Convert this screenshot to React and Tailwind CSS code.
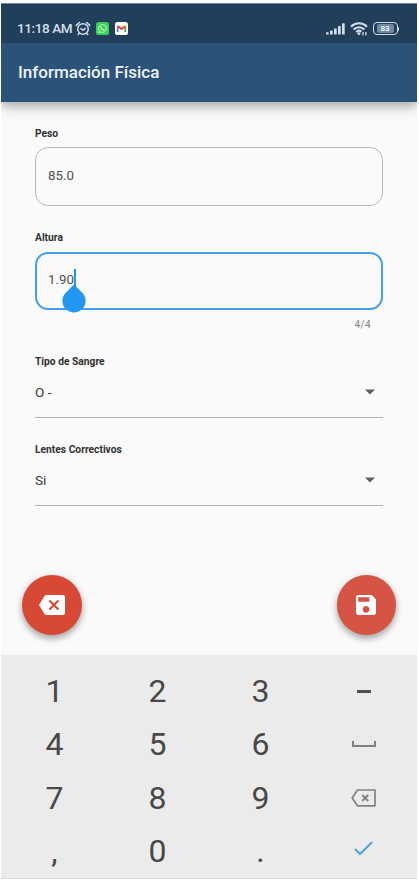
const STATUS_FG = '#d3deea';

function AlarmIcon() {
  return (
    <svg className="ml-[3px] h-[15px] w-[16px] shrink-0" viewBox="0 0 16 15" fill="none" stroke={STATUS_FG} strokeWidth="1.5" strokeLinecap="round">
      <circle cx="8" cy="8" r="5.3" />
      <path d="M1.2 4.4 4.4 1.5M14.8 4.4 11.6 1.5M5.9 7.6 8 9l2.3-1.6M4.4 12.2l-1.2 1.3M11.6 12.2l1.2 1.3" />
    </svg>
  );
}

function WhatsAppIcon() {
  return (
    <svg className="ml-[5px] h-[13px] w-[13px] shrink-0" viewBox="0 0 13 13">
      <rect width="13" height="13" rx="2.6" fill="#35d253" />
      <path d="M2.6 10.6 3.2 8.5A3.9 3.9 0 1 1 4.7 9.9Z" fill="#35d253" stroke="#d9fbdc" strokeWidth="0.9" strokeLinejoin="round" />
      <path d="M5 4.7c.1 1.6 1.4 3.1 3.2 3.3" fill="none" stroke="#d9fbdc" strokeWidth="1.1" strokeLinecap="round" />
    </svg>
  );
}

function GmailIcon() {
  return (
    <svg className="ml-[6px] h-[13px] w-[13px] shrink-0" viewBox="0 0 13 13">
      <rect width="13" height="13" rx="2.6" fill="#fdfdfd" />
      <path d="M2.7 10V4.2" stroke="#4285f4" strokeWidth="1.7" />
      <path d="M10.3 10V4.2" stroke="#34a853" strokeWidth="1.7" />
      <path d="M2.5 3.9 6.5 7 10.5 3.9" fill="none" stroke="#e8392c" strokeWidth="1.9" strokeLinejoin="round" />
      <path d="M9.5 4.7V3.5L11.150 3v2.6Z" fill="#fbbc04" />
    </svg>
  );
}

function SignalIcon() {
  return (
    <svg className="h-[12px] w-[19px] shrink-0" viewBox="0 0 19 12" fill={STATUS_FG}>
      <rect x="0" y="9.2" width="2.7" height="2.3" rx=".6" />
      <rect x="4" y="7.6" width="2.7" height="3.9" rx=".6" />
      <rect x="8" y="5.4" width="2.7" height="6.1" rx=".6" />
      <rect x="12" y="3" width="2.7" height="8.5" rx=".6" />
      <rect x="16" y="0.3" width="2.7" height="11.2" rx=".6" />
    </svg>
  );
}

function WifiIcon() {
  return (
    <svg className="ml-[5px] h-[14px] w-[18px] shrink-0" viewBox="0 0 18 14" fill="none" stroke={STATUS_FG}>
      <path d="M1 4.7a11.2 11.2 0 0 1 16 0M3.6 7.5a7.5 7.5 0 0 1 10.8 0M6.2 9.900a4 4 0 0 1 5.2-.3" strokeWidth="2" />
      <path d="m6.7 11 2.3 2.5 1.7-2.1a2.6 2.6 0 0 0-4-.4Z" fill={STATUS_FG} stroke="none" />
      <path d="M13 10v3.5M15.9 10v3.5" strokeWidth="1.3" />
    </svg>
  );
}

function Battery() {
  return (
    <div className="ml-[5px] flex items-center">
      <div className="flex h-[13px] w-[25px] items-center justify-center rounded-[4px] border-[1.5px] border-[#d3deea] p-[1px]">
        <div className="flex h-full w-[17px] items-center justify-center rounded-[2px] bg-[#7088a0] text-[8px] leading-none font-bold text-[#eaf1f8]">83</div>
      </div>
      <div className="h-[4px] w-[1.5px] rounded-r bg-[#d3deea]" />
    </div>
  );
}

function Label({ children }) {
  return <div className="h-[14px] text-[10.25px] leading-[15px] font-bold whitespace-nowrap text-[#303030]">{children}</div>;
}

function SelectField({ label, value }) {
  return (
    <div className="flex flex-col">
      <Label>{label}</Label>
      <div className="mt-[7px] flex h-[43px] items-start justify-between border-b border-[#b4b4b4] pt-[7px] pr-[8px]">
        <span className="text-[13.6px] leading-[20px] text-[#383838]">{value}</span>
        <svg className="mt-[7px] h-[6px] w-[10px]" viewBox="0 0 10 6" fill="#606060">
          <path d="M0 .4h10L5 5.6Z" />
        </svg>
      </div>
    </div>
  );
}

function Key({ children }) {
  return <div className="flex h-[53.5px] items-center justify-center text-[32px] leading-none text-[#484848]">{children}</div>;
}

function SpaceKey() {
  return (
    <svg className="h-[8px] w-[24px]" viewBox="0 0 24 8" fill="none" stroke="#808080" strokeWidth="2">
      <path d="M1 1v5h22V1" />
    </svg>
  );
}

function DeleteKey() {
  return (
    <svg className="h-[18px] w-[25px]" viewBox="0 0 25 18" fill="none" stroke="#828282" strokeWidth="1.7" strokeLinejoin="round">
      <path d="M6.5 1h17.5v15.8H6.5L1.2 9Z" />
      <path d="m11.2 6 6 6M17.2 6l-6 6" strokeWidth="1.9" />
    </svg>
  );
}

function CheckKey() {
  return (
    <svg className="mb-[5px] h-[15px] w-[19px]" viewBox="0 0 19 15" fill="none" stroke="#4ea6dc" strokeWidth="2.1">
      <path d="m1 8 5 5L18 1.200" />
    </svg>
  );
}

const fabClass = 'flex h-[59.5px] w-[59.5px] items-center justify-center rounded-full shadow-[0_4px_6px_rgba(0,0,0,0.28),0_1px_9px_rgba(0,0,0,0.10)]';

export default function App() {
  return (
    <div className="h-[884px] w-[419px] overflow-hidden bg-white pt-[3px] pl-[1px] font-[Roboto,sans-serif]">
      <div className="flex h-[876px] w-[416px] flex-col overflow-hidden bg-[#fafafa]">
        <header className="relative h-[99px] shrink-0 bg-[#2b5278] shadow-[0_4px_9px_rgba(0,0,0,0.24),0_8px_14px_rgba(0,0,0,0.09)]">
          <div className="flex h-[40px] items-center justify-between border-t border-[#6f8496] bg-[#213f5b] pt-[10px] pr-[18px] pl-[16px]">
            <div className="flex items-center">
              <span className="text-[13.6px] leading-none font-medium tracking-[-0.45px] whitespace-nowrap text-[#d3deea]">11:18 AM</span>
              <AlarmIcon />
              <WhatsAppIcon />
              <GmailIcon />
            </div>
            <div className="flex items-center">
              <SignalIcon />
              <WifiIcon />
              <Battery />
            </div>
          </div>
          <h1 className="pl-[17px] text-[17px] leading-[59px] font-medium whitespace-nowrap text-[#edf4fb]">Información Física</h1>
        </header>

        <main className="flex h-[553px] shrink-0 flex-col pt-[24px]">
          <div className="flex flex-col pr-[34px] pl-[34px]">
            <Label>Peso</Label>
            <div className="mt-[7px] flex h-[58.5px] items-center rounded-[13px] border border-[#b8b8b8] pl-[12px] text-[13.3px] text-[#505050]">85.0</div>
            <div className="mt-[24.5px]">
              <Label>Altura</Label>
            </div>
            <div className="mt-[7.5px] flex h-[58.5px] items-center rounded-[13px] border-2 border-[#42a0ee] pl-[11px] text-[13.3px] text-[#505050]">
              <span className="relative -top-[1px]">
                1.90
                <span className="absolute -top-[1px] -right-[2px] h-[19px] w-[2px] bg-[#2196f3]" />
                <svg className="absolute top-[14px] -right-[12px] h-[29px] w-[24px]" viewBox="0 0 24 29" fill="#2196f3">
                  <path d="M12 .5 20.200 8.700A11.600 11.600 0 1 1 3.800 8.700Z" />
                </svg>
              </span>
            </div>
            <div className="mt-[8px] mr-[12px] text-right text-[10px] leading-[14px] tracking-[0.35px] text-[#818181]">4/4</div>
            <div className="mt-[22px]">
              <SelectField label="Tipo de Sangre" value="O -" />
            </div>
            <div className="mt-[24px]">
              <SelectField label="Lentes Correctivos" value="Si" />
            </div>
          </div>
          <div className="mt-[69px] flex justify-between pr-[21px] pl-[21px]">
            <div className={`${fabClass} bg-[#d84935]`}>
              <svg className="h-[20px] w-[26px]" viewBox="0 0 26 20">
                <path d="M7 0h17a2 2 0 0 1 2 2v16a2 2 0 0 1-2 2H7q-.8 0-1.300-.7L0 10 5.700.7Q6.200 0 7 0Z" fill="#fff" />
                <path d="m10.400 5.500 9 9M19.400 5.500l-9 9" stroke="#d84935" strokeWidth="2.1" />
              </svg>
            </div>
            <div className={`${fabClass} bg-[#d65444]`}>
              <svg className="h-[20px] w-[20px]" viewBox="3 3 18 18" fill="#fff">
                <path d="M17 3H5c-1.110 0-2 .9-2 2v14c0 1.100.89 2 2 2h14c1.100 0 2-.9 2-2V7l-4-4zm-5 16c-1.660 0-3-1.340-3-3s1.340-3 3-3 3 1.340 3 3-1.340 3-3 3zm3-10H5V5h10v4z" />
              </svg>
            </div>
          </div>
        </main>

        <section className="h-[224px] shrink-0 border-b border-[#dcdcdc] bg-[#ebebeb] pt-[9px]">
          <div className="grid w-[414px] grid-cols-4 pl-[2px]">
            <Key>1</Key>
            <Key>2</Key>
            <Key>3</Key>
            <Key><span className="mt-[1px] h-[2.5px] w-[14px] bg-[#505050]" /></Key>
            <Key>4</Key>
            <Key>5</Key>
            <Key>6</Key>
            <Key><SpaceKey /></Key>
            <Key>7</Key>
            <Key>8</Key>
            <Key>9</Key>
            <Key><DeleteKey /></Key>
            <Key>,</Key>
            <Key>0</Key>
            <Key>.</Key>
            <Key><CheckKey /></Key>
          </div>
        </section>
      </div>
    </div>
  );
}
